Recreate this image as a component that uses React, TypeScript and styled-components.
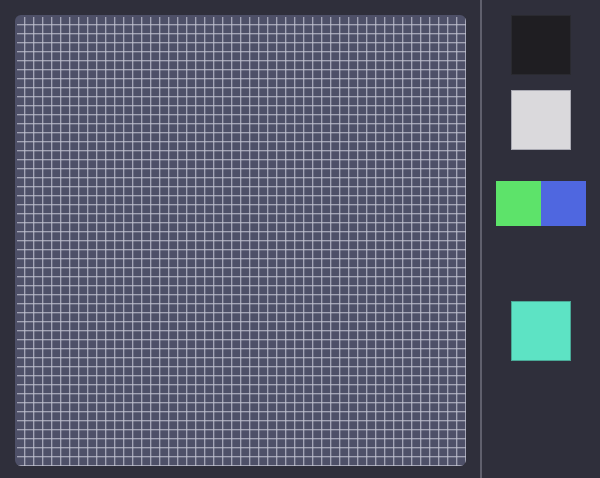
import React from "react";
import styled, { createGlobalStyle } from "styled-components";

const Global = createGlobalStyle`
  html, body { margin: 0; padding: 0; background: #2f2f3b; }
  body { font-family: "Liberation Sans", Arial, sans-serif; }
`;

const Page = styled.div`
  display: flex;
  width: 600px;
  height: 478px;
  background: #2f2f3b;
  overflow: hidden;
`;

const Workspace = styled.div`
  width: 480px;
  padding: 15px 0 0 15px;
  box-sizing: border-box;
`;

const Canvas = styled.div`
  width: 451px;
  height: 451px;
  border-radius: 6px;
  background-color: #4e5068;
  background-image:
    linear-gradient(to right, #4e5068 0 2px, transparent 2px),
    linear-gradient(to bottom, #4e5068 0 2px, transparent 2px),
    linear-gradient(
      to right,
      rgba(196, 197, 212, 0.72) 0 1px,
      rgba(196, 197, 212, 0.25) 1px 2px,
      transparent 2px
    ),
    linear-gradient(
      to bottom,
      rgba(196, 197, 212, 0.72) 0 1px,
      rgba(196, 197, 212, 0.25) 1px 2px,
      transparent 2px
    );
  background-size: 2px 100%, 100% 2px, 9px 9px, 9px 9px;
  background-position: 0 0, 0 0, 0 0, 0 0;
  background-repeat: no-repeat, no-repeat, repeat, repeat;
`;

const Divider = styled.div`
  width: 2px;
  background: #60606d;
`;

const Palette = styled.div`
  flex: 1;
  display: flex;
  flex-direction: column;
  align-items: center;
  padding-top: 15px;
`;

const Swatch = styled.div<{ $color: string; $border: string; $mt: number }>`
  width: 60px;
  height: 60px;
  box-sizing: border-box;
  margin-top: ${(p) => p.$mt}px;
  background: ${(p) => p.$color};
  border: 1px solid ${(p) => p.$border};
`;

const Pair = styled.div`
  display: flex;
  margin-top: 31px;
`;

const Half = styled.div<{ $color: string }>`
  width: 45px;
  height: 45px;
  background: ${(p) => p.$color};
`;

export default function App() {
  return (
    <>
      <Global />
      <Page>
        <Workspace>
          <Canvas />
        </Workspace>
        <Divider />
        <Palette>
          <Swatch $color="#1f1e22" $border="#2a2a30" $mt={0} />
          <Swatch $color="#dad9dc" $border="#a9a9b2" $mt={15} />
          <Pair>
            <Half $color="#5de36a" />
            <Half $color="#4f67e0" />
          </Pair>
          <Swatch $color="#5de3c4" $border="#4aa896" $mt={75} />
        </Palette>
      </Page>
    </>
  );
}
